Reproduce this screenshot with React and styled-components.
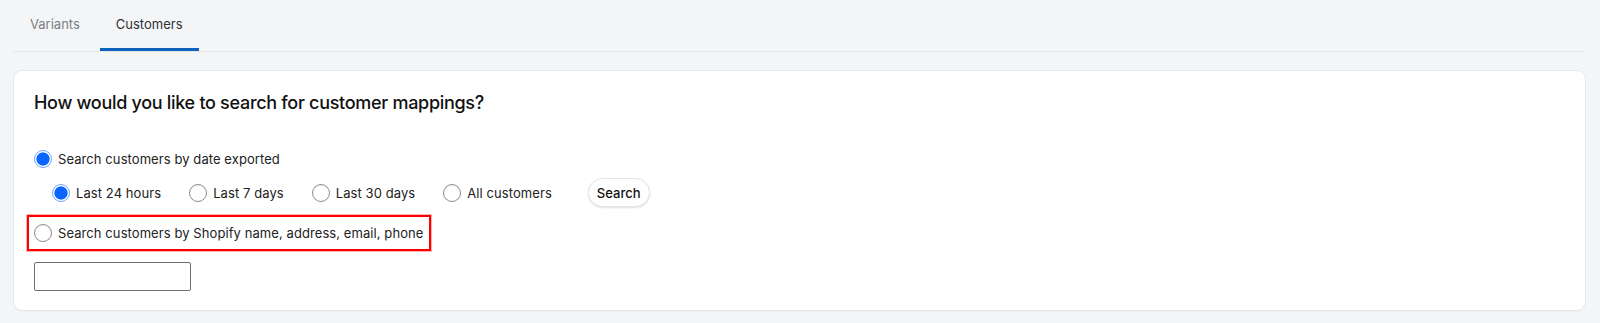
import React, { useState } from "react";
import styled, { createGlobalStyle } from "styled-components";

const Global = createGlobalStyle`
  html, body { margin: 0; padding: 0; background: #f4f5f7; }
  body { font-family: Inter, "Noto Sans", "Liberation Sans", sans-serif; color: #202223; }
  * { box-sizing: border-box; }
`;

const Page = styled.div`
  padding: 0 15px 13px 14px;
  background: #f4f5f7;
`;

const TabList = styled.div`
  display: flex;
  gap: 4px;
  border-bottom: 1px solid #e3e4e6;
`;

const Tab = styled.button`
  height: 51px;
  padding: 0 16px;
  margin: 0;
  border: none;
  border-bottom: 3px solid ${(p) => (p.$active ? "#0b62bf" : "transparent")};
  background: none;
  font-family: inherit;
  font-size: 13px;
  color: ${(p) => (p.$active ? "#303133" : "#7c7f83")};
  cursor: pointer;
`;

const Card = styled.section`
  margin-top: 19px;
  background: #fff;
  border-radius: 8px;
  box-shadow: 0 0 0 1px #e6e7e9, 0 1px 2px rgba(0, 0, 0, 0.06);
  padding: 20px 20px 19px;
`;

const Heading = styled.h2`
  margin: 0 0 32px;
  font-size: 18px;
  line-height: 24px;
  font-weight: 500;
  color: #111;
  letter-spacing: -0.3px;
`;

const Options = styled.div`
  display: flex;
  flex-direction: column;
  align-items: flex-start;
`;

const Label = styled.label`
  display: inline-flex;
  align-items: center;
  gap: 6px;
  font-size: 13px;
  line-height: 24px;
  letter-spacing: 0.08px;
  color: #222;
  cursor: pointer;
`;

const Radio = styled.input.attrs({ type: "radio" })`
  appearance: none;
  margin: 0;
  width: 18px;
  height: 18px;
  border-radius: 50%;
  flex: none;
  border: 1px solid #8d8d8d;
  background: #fff;
  box-shadow: inset 0 1px 1px rgba(0, 0, 0, 0.06);
  &:checked {
    border: 1.5px solid #6ea6ff;
    background: radial-gradient(circle, #0a66ff 0, #0a66ff 6.2px, #fff 7px);
    box-shadow: none;
  }
`;

const SubRow = styled.div`
  display: flex;
  align-items: center;
  gap: 28px;
  margin: 7px 0 0 18px;
  height: 29px;
`;

const Pill = styled.button`
  margin-left: 8px;
  height: 29px;
  padding: 0 8px;
  border-radius: 15px;
  border: 1px solid #e4e4e4;
  background: #fff;
  box-shadow: 0 1px 2px rgba(0, 0, 0, 0.12);
  font-family: inherit;
  font-size: 13px;
  font-weight: 500;
  color: #111;
  cursor: pointer;
`;

const Highlight = styled.div`
  margin: 8px 0 0 -7px;
  padding: 0 6px 0 5px;
  height: 36px;
  display: flex;
  align-items: center;
  border: 2px solid #ff0000;
  box-shadow: 0 0 0 1px rgba(255, 0, 0, 0.3);
`;

const TextInput = styled.input`
  margin-top: 11px;
  width: 157px;
  height: 29px;
  border: 1px solid #6f6f6f;
  border-radius: 2px;
  padding: 0 6px;
  font-family: inherit;
  font-size: 13px;
`;

const ranges = ["Last 24 hours", "Last 7 days", "Last 30 days", "All customers"];

export default function App() {
  const [mode, setMode] = useState("date");
  const [range, setRange] = useState(ranges[0]);
  return (
    <Page>
      <Global />
      <TabList>
        <Tab>Variants</Tab>
        <Tab $active>Customers</Tab>
      </TabList>
      <Card>
        <Heading>How would you like to search for customer mappings?</Heading>
        <Options>
          <Label>
            <Radio name="mode" checked={mode === "date"} onChange={() => setMode("date")} />
            Search customers by date exported
          </Label>
          <SubRow>
            {ranges.map((r) => (
              <Label key={r}>
                <Radio name="range" checked={range === r} onChange={() => setRange(r)} />
                {r}
              </Label>
            ))}
            <Pill>Search</Pill>
          </SubRow>
          <Highlight>
            <Label>
              <Radio name="mode" checked={mode === "text"} onChange={() => setMode("text")} />
              Search customers by Shopify name, address, email, phone
            </Label>
          </Highlight>
          <TextInput type="text" />
        </Options>
      </Card>
    </Page>
  );
}
